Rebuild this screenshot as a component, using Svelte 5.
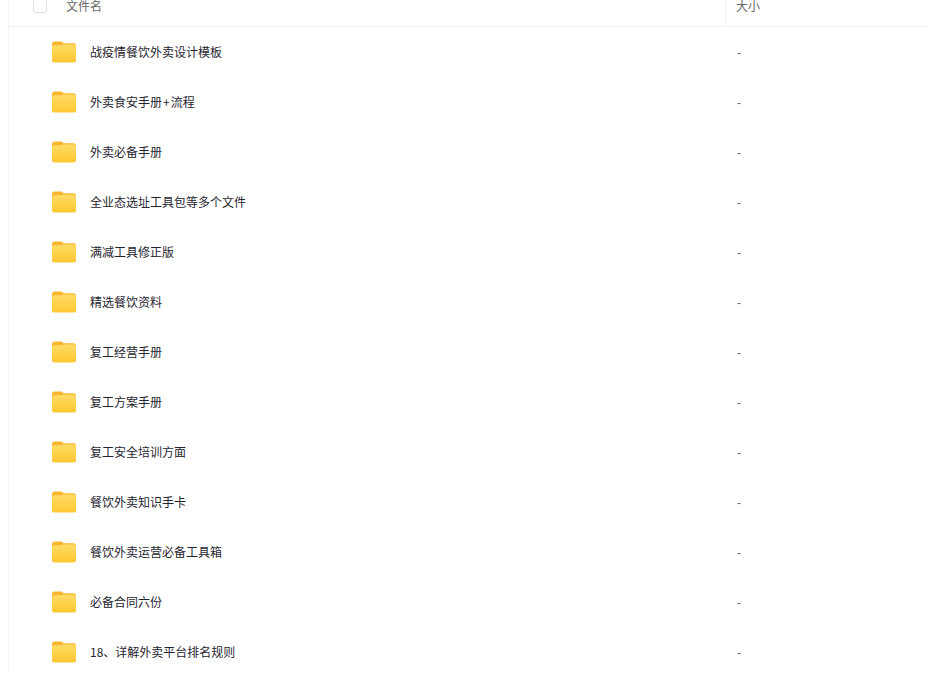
<script>
  const names = [['战疫情餐饮外卖设计模板'],['外卖食安手册','流程'],['外卖必备手册'],['全业态选址工具包等多个文件'],['满减工具修正版'],['精选餐饮资料'],['复工经营手册'],['复工方案手册'],['复工安全培训方面'],['餐饮外卖知识手卡'],['餐饮外卖运营必备工具箱'],['必备合同六份'],['18、详解外卖平台排名规则']];
</script>

<div class="page">
  <div class="header">
    <div class="name-head"><span class="check"></span><span class="title">文件名</span></div>
    <div class="size-head">大小</div>
  </div>
  {#each names as parts}
    <div class="row">
      <div class="name-cell">
        <svg class="folder" width="26" height="24" viewBox="0 0 26 24">
          <defs>
            <linearGradient id="fg" x1="0" y1="0" x2="0" y2="1">
              <stop offset="0" stop-color="#ffdc66"/>
              <stop offset="1" stop-color="#ffc731"/>
            </linearGradient>
          </defs>
          <path d="M1 4.500C1 2.600 2 1.500 3.800 1.500H9.500C11 1.500 11.500 2.200 12.500 3.200H22.500C24.200 3.200 25 4.200 25 6V10H1Z" fill="#f9b62d"/>
          <path d="M1 7.500C1 6.100 2 5.300 3.200 5.300H9.500C11 5.300 11.500 4.500 13 4.500H22.800C24.200 4.500 25 5.500 25 7V20C25 21.700 24 22.500 22.800 22.500H3.200C2 22.500 1 21.700 1 20Z" fill="url(#fg)"/>
        </svg>
        <span class="name">{parts[0]}{#if parts[1]}<span class="plus">+</span>{parts[1]}{/if}</span>
      </div>
      <div class="size">-</div>
    </div>
  {/each}
</div>

<style>
  :global(body) {
    margin: 0;
    background: #fff;
    overflow: hidden;
  }
  .page {
    width: 919px;
    height: 674px;
    margin-left: 8px;
    border-left: 1px solid #f5f5f6;
    box-sizing: border-box;
    font-family: "Liberation Sans", "Noto Sans CJK SC", sans-serif;
    overflow: hidden;
  }
  .header {
    display: flex;
    height: 27px;
    box-sizing: border-box;
    border-bottom: 1px solid #f1f2f3;
    font-size: 12px;
    color: #666;
  }
  .name-head {
    width: 716px;
    display: flex;
    align-items: flex-start;
    padding-left: 24px;
    box-sizing: border-box;
  }
  .check {
    width: 14px;
    height: 14px;
    box-sizing: border-box;
    border: 1px solid #dcdfe3;
    border-radius: 3px;
    margin-top: -1px;
    flex: none;
  }
  .title {
    margin-left: 19px;
    line-height: 14px;
  }
  .size-head {
    flex: 1;
    border-left: 1px solid #f1f2f3;
    padding-left: 10px;
    line-height: 14px;
  }
  .row {
    display: flex;
    height: 50px;
    align-items: center;
  }
  .name-cell {
    width: 717px;
    display: flex;
    align-items: center;
    padding-left: 42px;
    box-sizing: border-box;
  }
  .folder {
    flex: none;
  }
  .name {
    margin-left: 13px;
    margin-top: -2px;
    font-size: 12px;
    color: #1f2430;
    font-family: "Noto Sans CJK SC", "Liberation Sans", sans-serif;
  }
  .plus {
    padding: 0 1px;
  }
  .size {
    padding-left: 11px;
    padding-top: 1px;
    font-size: 12px;
    color: #666;
  }
</style>
